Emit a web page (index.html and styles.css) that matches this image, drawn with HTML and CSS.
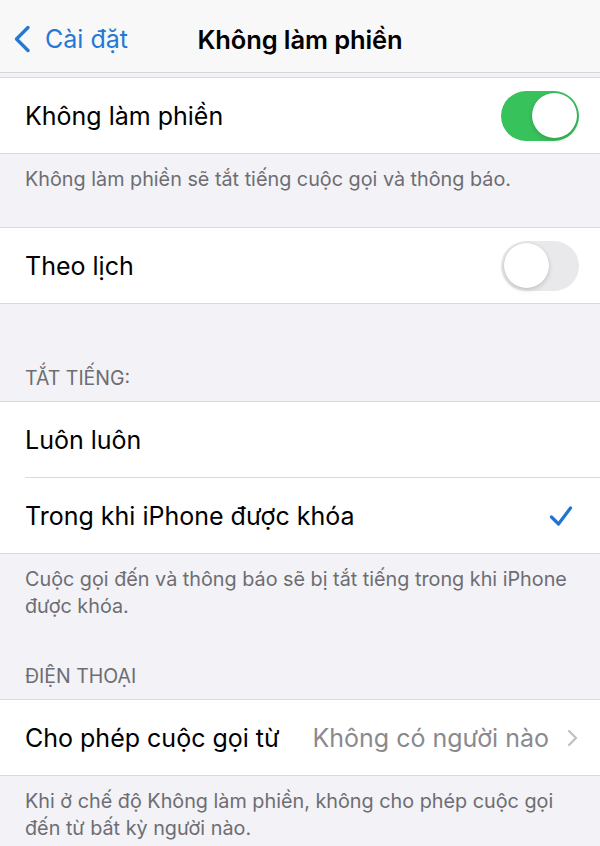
FILE: index.html
```html
<!DOCTYPE html>
<html lang="vi">
<head>
<meta charset="utf-8">
<title>Không làm phiền</title>
<link rel="stylesheet" href="styles.css">
</head>
<body>
<header class="nav">
  <a class="back" href="#">
    <svg class="back-chevron" viewBox="0 0 18 28" width="18" height="28" aria-hidden="true">
      <path d="M15 2.5 L3.5 14 L15 25.5" fill="none" stroke="currentColor" stroke-width="3.4" stroke-linecap="round" stroke-linejoin="round"/>
    </svg>
    <span>Cài đặt</span>
  </a>
  <h1 class="title">Không làm phiền</h1>
</header>

<main class="settings">
  <section class="group group-first">
    <div class="row">
      <span class="label">Không làm phiền</span>
      <span class="switch switch-on"><span class="knob"></span></span>
    </div>
  </section>
  <p class="footer">Không làm phiền sẽ tắt tiếng cuộc gọi và thông báo.</p>

  <section class="group">
    <div class="row">
      <span class="label">Theo lịch</span>
      <span class="switch"><span class="knob"></span></span>
    </div>
  </section>

  <h2 class="header header-spaced">TẮT TIẾNG:</h2>
  <section class="group">
    <div class="row row-divided">
      <span class="label">Luôn luôn</span>
    </div>
    <div class="row">
      <span class="label">Trong khi iPhone được khóa</span>
      <svg class="check" viewBox="0 0 24 22" width="24" height="22" aria-hidden="true">
        <path d="M2.5 12 L9.5 19 L21.5 3" fill="none" stroke="currentColor" stroke-width="3.2" stroke-linecap="round" stroke-linejoin="round"/>
      </svg>
    </div>
  </section>
  <p class="footer">Cuộc gọi đến và thông báo sẽ bị tắt tiếng trong khi iPhone<br>được khóa.</p>

  <h2 class="header">ĐIỆN THOẠI</h2>
  <section class="group">
    <div class="row">
      <span class="label">Cho phép cuộc gọi từ</span>
      <span class="value">Không có người nào</span>
      <svg class="disclosure" viewBox="0 0 11 18" width="11" height="18" aria-hidden="true">
        <path d="M2 2 L9 9 L2 16" fill="none" stroke="currentColor" stroke-width="2.4" stroke-linecap="round" stroke-linejoin="round"/>
      </svg>
    </div>
  </section>
  <p class="footer">Khi ở chế độ Không làm phiền, không cho phép cuộc gọi<br>đến từ bất kỳ người nào.</p>
</main>
</body>
</html>
```

FILE: styles.css
```css
* {
  box-sizing: border-box;
}

html, body {
  margin: 0;
  padding: 0;
}

body {
  background: #f2f2f7;
  font-family: "Inter", "Noto Sans", "Liberation Sans", sans-serif;
  color: #000;
  overflow: hidden;
}

/* Navigation bar */
.nav {
  height: 73px;
  padding-top: 6px;
  background: #f8f8f8;
  border-bottom: 1px solid #d6d6d8;
  display: flex;
  align-items: center;
  justify-content: center;
  position: relative;
}

.back {
  position: absolute;
  left: 13px;
  top: 25px;
  display: flex;
  align-items: center;
  gap: 14px;
  color: #2578d3;
  text-decoration: none;
  font-size: 25px;
  line-height: 28px;
}

.back-chevron {
  display: block;
}

.title {
  margin: 0;
  font-size: 25.5px;
  font-weight: 600;
  letter-spacing: -0.1px;
}

/* Grouped table */
.group {
  background: #fff;
  border-top: 1px solid #dadade;
  border-bottom: 1px solid #dadade;
}

.group-first {
  margin-top: 4px;
}

.row {
  height: 75px;
  padding: 0 21px 0 25px;
  display: flex;
  align-items: center;
  position: relative;
}

.row-divided::after {
  content: "";
  position: absolute;
  left: 25px;
  right: 0;
  bottom: -1px;
  height: 1px;
  background: #dadade;
}

.row-divided {
  margin-bottom: 1px;
}

.label {
  flex: 1;
  font-size: 25px;
}

.value {
  font-size: 25px;
  color: #8a8a8e;
  margin-right: 18px;
}

.disclosure {
  color: #c2c2c6;
  margin-right: 1px;
}

.check {
  color: #1f74d4;
  margin-right: 6px;
}

/* Switches */
.switch {
  width: 78px;
  height: 50px;
  border-radius: 25px;
  background: #e9e9eb;
  position: relative;
  flex: none;
}

.switch .knob {
  position: absolute;
  top: 2.5px;
  left: 2.5px;
  width: 45px;
  height: 45px;
  border-radius: 50%;
  background: #fff;
  box-shadow: 0 2px 5px rgba(0, 0, 0, 0.16), 0 0 0 0.5px rgba(0, 0, 0, 0.06);
}

.switch-on {
  background: #38c25c;
}

.switch-on .knob {
  left: auto;
  right: 2.5px;
}

/* Section header and footer text */
.header {
  margin: 0;
  padding: 9px 25px;
  font-size: 19.5px;
  line-height: 27px;
  font-weight: 400;
  color: #6d6d72;
}

.header-spaced {
  margin-top: 52px;
}

.footer {
  margin: 0;
  padding: 12px 25px 34px;
  font-size: 19.8px;
  line-height: 27px;
  color: #6d6d72;
}
```
